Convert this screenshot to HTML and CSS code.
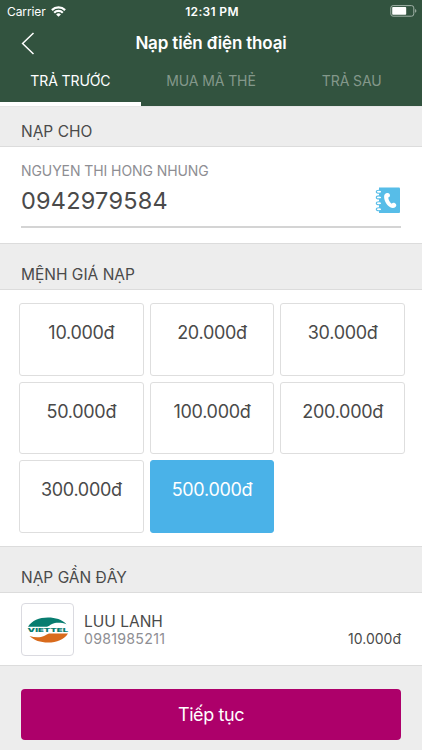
FILE: index.html
```html
<!DOCTYPE html>
<html lang="vi">
<head>
<meta charset="utf-8">
<title>Nạp tiền điện thoại</title>
<link rel="stylesheet" href="styles.css">
</head>
<body>
<header class="header">
  <div class="status">
    <div class="carrier"><span>Carrier</span>
      <svg width="15" height="11" viewBox="0 0 15 11" fill="none" stroke="#fff" stroke-width="2.2"><path d="M.9 4.100a9.400 9.400 0 0 1 13.200 0M3.200 6.700a6.100 6.100 0 0 1 8.600 0"/><path d="M7.500 10.800 5.100 8.400a3.400 3.400 0 0 1 4.800 0Z" fill="#fff" stroke="none"/></svg>
    </div>
    <span class="clock">12:31 PM</span>
    <svg class="battery" width="27" height="12" viewBox="0 0 27 12"><rect x=".8" y=".6" width="23" height="10.6" rx="2.3" fill="none" stroke="#a2b2a8"/><rect x="2.2" y="2" width="14" height="7.8" rx=".8" fill="#fff"/><path d="M25.1 4.1q1.3.6 1.3 1.8t-1.3 1.8z" fill="#a2b2a8"/></svg>
  </div>
  <div class="nav">
    <svg class="back" width="14" height="23" viewBox="0 0 14 23" fill="none" stroke="#fff" stroke-width="1.5"><path d="M12.500 1 1.600 11.500 12.500 22"/></svg>
    <h1>Nạp tiền điện thoại</h1>
  </div>
  <nav class="tabs">
    <a class="tab active">TRẢ TRƯỚC</a>
    <a class="tab">MUA MÃ THẺ</a>
    <a class="tab">TRẢ SAU</a>
  </nav>
</header>
<h2 class="section first"><span>NẠP CHO</span></h2>
<section class="recipient">
  <div class="field">
    <div>
      <div class="name">NGUYEN THI HONG NHUNG</div>
      <div class="number">0942979584</div>
    </div>
    <svg class="book" width="26" height="27" viewBox="0 0 26 27"><path d="M4 .5h20a1 1 0 0 1 1 1v23.600a1 1 0 0 1-1 1H4z" fill="#57bde8"/><g fill="#fff" stroke="#57bde8" stroke-width="1.100"><ellipse cx="4" cy="4.700" rx="2.700" ry="1.500"/><ellipse cx="4" cy="10.400" rx="2.700" ry="1.500"/><ellipse cx="4" cy="16.300" rx="2.700" ry="1.500"/><ellipse cx="4" cy="22.200" rx="2.700" ry="1.500"/></g><path d="M11.800 6.100c1.800-.7 3.200.6 3.200 2.100 0 1.400-.7 1.900-1.800 2.200.3 2.400 1.500 4.800 3.500 6.400.9-1 2-1.300 3.300-.5 1.600 1 1.800 2.500.5 3.700-1.300 1.300-3.500 1.400-5.300.3C11.500 18 9 13.500 9.100 9.500c0-1.700 1-2.900 2.700-3.400z" fill="#fff"/></svg>
  </div>
</section>
<h2 class="section second"><span>MỆNH GIÁ NẠP</span></h2>
<section class="amounts">
  <button>10.000đ</button><button>20.000đ</button><button>30.000đ</button>
  <button>50.000đ</button><button>100.000đ</button><button>200.000đ</button>
  <button>300.000đ</button><button class="selected">500.000đ</button>
</section>
<h2 class="section third"><span>NẠP GẦN ĐÂY</span></h2>
<section class="recent">
  <div class="logo">
    <svg width="42" height="26" viewBox="0 0 42 26"><path d="M1 9.800C5 3.500 12 .5 21 .5c7.500 0 14 2.100 18.500 6.700-5-1.800-11-2-14.500-.2-2.200 1.100-3.500 2.400-5 2.800z" fill="#087d70"/><path d="M41 16.400C37 22.500 30 25.500 21 25.500c-7.500 0-14-2.100-18.500-6.500 5 1.800 11 1.800 14.500 0 2.200-1.100 3.500-2.200 5-2.600z" fill="#d96b1c"/><text x=".6" y="15.100" textLength="40.500" lengthAdjust="spacingAndGlyphs" class="brand">VIETTEL</text></svg>
  </div>
  <div class="contact"><div class="who">LUU LANH</div><div class="phone">0981985211</div></div>
  <div class="price">10.000đ</div>
</section>
<footer class="footer"><button class="continue">Tiếp tục</button></footer>
</body>
</html>
```
FILE: styles.css
```css
* { box-sizing: border-box; }
body {
  margin: 0;
  width: 422px;
  height: 750px;
  overflow: hidden;
  background: #ededed;
  color: #4a4a4a;
  font-family: Inter, "Liberation Sans", sans-serif;
}
h1, h2 { margin: 0; font-weight: 400; }
button { font-family: inherit; padding: 0; margin: 0; }
svg { display: block; flex: none; }

.header { height: 106px; background: #32533f; color: #fff; display: flex; flex-direction: column; }
.status { height: 22px; display: grid; grid-template-columns: 1fr auto 1fr; align-items: center; padding: 0 5px 0 7px; font-size: 12px; }
.carrier { display: flex; align-items: center; gap: 5px; letter-spacing: -.1px; }
.clock { font-weight: 600; letter-spacing: .35px; }
.battery { justify-self: end; }
.nav { height: 42px; display: grid; grid-template-columns: 21px 1fr 21px; align-items: center; }
.back { justify-self: start; margin-left: 21px; }
.nav h1 { font-size: 17px; font-weight: 600; text-align: center; letter-spacing: -.16px; white-space: nowrap; }
.tabs { flex: 1; display: grid; grid-template-columns: repeat(3, 1fr); font-size: 14px; letter-spacing: -.1px; }
.tab { color: #84988b; display: flex; justify-content: center; padding-top: 8px; line-height: 17px; border-bottom: 4px solid transparent; }
.tab.active { color: #fff; border-color: #fff; }

.section { display: flex; align-items: flex-end; padding: 0 21px 5px; font-size: 15.500px; line-height: 19px; border: solid #dcdcdc; border-width: 1px 0; }
.first { height: 41px; border-top-color: #e6e6e6; }
.second { height: 47px; }
.third { height: 47px; }

.recipient { height: 96px; background: #fff; padding: 0 21px; }
.field { height: 81px; border-bottom: 2px solid #d4d4d4; display: flex; justify-content: space-between; padding-top: 15px; }
.name { font-size: 14px; line-height: 18px; color: #8e8e93; letter-spacing: -.08px; }
.number { font-size: 23.500px; line-height: 28px; margin-top: 7px; letter-spacing: .22px; }
.book { margin-top: 25px; }

.amounts { height: 256px; background: #fff; padding: 13px 17px 0 19px; display: grid; grid-template-columns: repeat(3, 1fr); grid-auto-rows: 72.500px; align-content: start; gap: 6px; }
.amounts button { border: 1px solid #dedede; border-radius: 3px; background: #fff; color: #4a4a4a; font-size: 18px; line-height: 22px; letter-spacing: -.3px; padding-bottom: 12px; }
.amounts .selected { background: #4ab2e8; border-color: #4ab2e8; color: #fff; }

.recent { height: 73px; background: #fff; border-bottom: 1px solid #dcdcdc; padding: 10px 21px 0; display: flex; }
.logo { width: 53px; height: 53px; border: 1px solid #dadae0; border-radius: 4px; display: flex; align-items: center; justify-content: center; }
.brand { font-family: Inter, sans-serif; font-size: 5.300px; font-weight: 900; fill: #087d70; }
.contact { margin-left: 10px; padding-top: 9px; flex: 1; }
.who { font-size: 15.500px; line-height: 19px; }
.phone { font-size: 14.200px; line-height: 15px; color: #8e8e93; letter-spacing: .25px; }
.price { padding-top: 27px; font-size: 14px; line-height: 17px; }

.footer { padding: 23px 21px 0; }
.continue { display: block; width: 100%; height: 51px; border: 0; border-radius: 4px; background: #ad006a; color: #fff; font-size: 18px; letter-spacing: -.4px; padding-bottom: 1px; }
```
